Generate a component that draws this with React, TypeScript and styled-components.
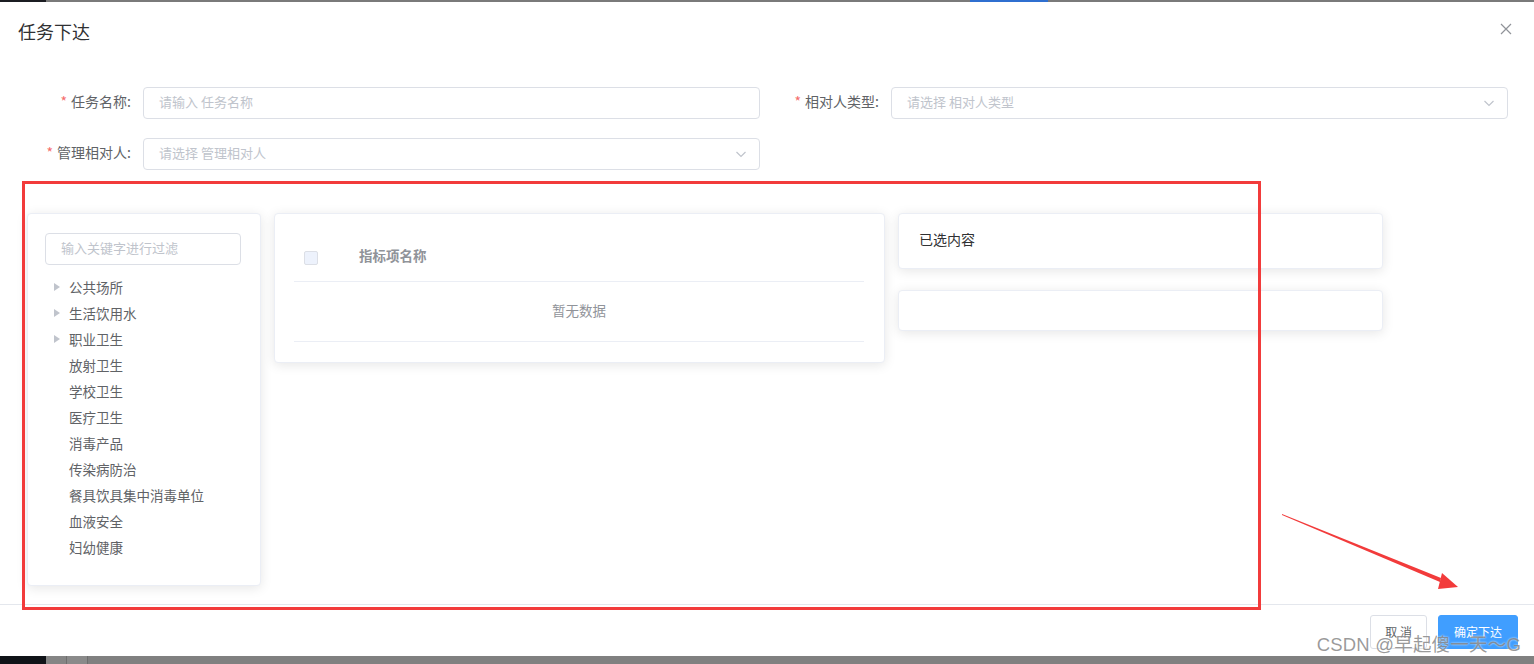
import React from 'react';
import styled, { createGlobalStyle } from 'styled-components';

const GlobalStyle = createGlobalStyle`
  html, body {
    margin: 0;
    padding: 0;
    background: #fff;
  }
  body {
    font-family: 'Noto Sans CJK SC', 'Liberation Sans', sans-serif;
    color: #606266;
  }
  * {
    box-sizing: border-box;
  }
`;

const Page = styled.div`
  position: relative;
  display: flex;
  flex-direction: column;
  height: 664px;
  overflow: hidden;
`;

const EdgeStrip = styled.div<{ $h: number; $bg: string }>`
  display: flex;
  flex: none;
  height: ${({ $h }) => $h}px;
  background: ${({ $bg }) => $bg};
`;

const EdgeSeg = styled.div<{ $w: number; $bg: string }>`
  width: ${({ $w }) => $w}px;
  background: ${({ $bg }) => $bg};
  flex: none;
`;

const Dialog = styled.div`
  flex: 1;
  display: flex;
  flex-direction: column;
  background: #fff;
`;

const Header = styled.div`
  display: flex;
  align-items: flex-start;
  justify-content: space-between;
  padding: 17px 22px 0 18px;
  height: 60px;
`;

const Title = styled.div`
  font-size: 18px;
  line-height: 24px;
  color: #303133;
  margin-top: 0;
`;

const CloseBtn = styled.button`
  border: none;
  background: none;
  padding: 0;
  margin-top: 4px;
  width: 12px;
  height: 12px;
  display: flex;
  cursor: pointer;
`;

const Form = styled.div`
  display: grid;
  grid-template-columns: 1fr 1fr;
  column-gap: 8px;
  row-gap: 19px;
  padding: 25px 26px 0 20px;
`;

const FormItem = styled.div`
  display: flex;
  align-items: center;
  height: 32px;
`;

const Label = styled.label`
  width: 123px;
  padding-right: 12px;
  padding-bottom: 3px;
  text-align: right;
  font-size: 14px;
  line-height: 29px;
  color: #606266;
  white-space: nowrap;

  &::before {
    content: '*';
    color: #f56c6c;
    margin-right: 4px;
  }
`;

const Field = styled.div`
  flex: 1;
  height: 32px;
  border: 1px solid #dcdfe6;
  border-radius: 4px;
  display: flex;
  align-items: center;
  justify-content: space-between;
  padding: 0 12px 3px 15px;
  font-size: 13px;
  color: #c0c4cc;

  svg {
    margin-top: 3px;
  }
`;

const Workspace = styled.div`
  display: flex;
  align-items: flex-start;
  gap: 13px;
  padding: 43px 0 0 27px;
  flex: 1;
`;

const Card = styled.div<{ $w: number }>`
  width: ${({ $w }) => $w}px;
  flex: none;
  background: #fff;
  border: 1px solid #ebeef5;
  border-radius: 4px;
  box-shadow: 0 2px 12px 0 rgba(0, 0, 0, 0.1);
`;

const TreeCard = styled(Card)`
  height: 373px;
  padding: 19px 19px 0 17px;
`;

const FilterInput = styled.div`
  height: 32px;
  border: 1px solid #dcdfe6;
  border-radius: 4px;
  padding: 0 0 3px 15px;
  display: flex;
  align-items: center;
  font-size: 13px;
  color: #c0c4cc;
  margin-bottom: 9px;
`;

const TreeNode = styled.div`
  display: flex;
  align-items: center;
  height: 26px;
  padding-bottom: 1px;
  font-size: 13.5px;
  color: #606266;
`;

const Caret = styled.span<{ $show: boolean }>`
  width: 24px;
  display: flex;
  justify-content: center;
  margin-top: 1px;
  visibility: ${({ $show }) => ($show ? 'visible' : 'hidden')};

  &::before {
    content: '';
    border-left: 6px solid #c0c4cc;
    border-top: 4px solid transparent;
    border-bottom: 4px solid transparent;
    margin-left: -1px;
  }
`;

const TableCard = styled(Card)`
  padding: 20px 20px 20px 19px;
`;

const HeadRow = styled.div`
  display: flex;
  align-items: center;
  height: 48px;
  padding-top: 2px;
  border-bottom: 1px solid #ebeef5;
`;

const CheckCell = styled.div`
  width: 65px;
  padding-left: 10px;
  display: flex;
  margin-top: -2px;
`;

const Checkbox = styled.span`
  width: 14px;
  height: 14px;
  border: 1px solid #dcdfe6;
  border-radius: 2px;
  background: #edf2fc;
`;

const HeadText = styled.div`
  font-size: 13.5px;
  font-weight: 700;
  color: #909399;
  margin-top: -7px;
`;

const EmptyRow = styled.div`
  height: 60px;
  display: flex;
  align-items: center;
  justify-content: center;
  padding-bottom: 4px;
  font-size: 13.5px;
  color: #909399;
  border-bottom: 1px solid #ebeef5;
`;

const SideCol = styled.div`
  display: flex;
  flex-direction: column;
  gap: 21px;
`;

const PickedCard = styled(Card)<{ $h: number }>`
  height: ${({ $h }) => $h}px;
  padding: 0 20px 4px;
  display: flex;
  align-items: center;
  font-size: 14px;
  color: #303133;
`;

const Footer = styled.div`
  flex: none;
  height: 52px;
  border-top: 1px solid #e4e7ed;
  display: flex;
  justify-content: flex-end;
  gap: 11px;
  padding: 10px 16px 0 0;
`;

const Button = styled.button<{ $primary?: boolean }>`
  height: 34px;
  padding: 0 ${({ $primary }) => ($primary ? 15 : 14)}px 2px;
  border-radius: 3px;
  border: 1px solid ${({ $primary }) => ($primary ? '#409eff' : '#dcdfe6')};
  background: ${({ $primary }) => ($primary ? '#409eff' : '#fff')};
  color: ${({ $primary }) => ($primary ? '#fff' : '#606266')};
  font-family: inherit;
  font-size: 12px;
  cursor: pointer;
`;

const Watermark = styled.div`
  position: absolute;
  right: 13px;
  bottom: 8px;
  font-family: 'Liberation Sans', 'Noto Sans CJK SC', sans-serif;
  font-size: 18.5px;
  line-height: 22px;
  color: rgba(115, 115, 115, 0.72);
  text-shadow: 0 0 2px rgba(255, 255, 255, 0.9);
  letter-spacing: 0.2px;
  pointer-events: none;
`;

const Annotation = styled.div`
  position: absolute;
  left: 22px;
  top: 181px;
  width: 1239px;
  height: 429px;
  border: 3px solid #f23b3b;
  pointer-events: none;
`;

const ArrowSvg = styled.svg`
  position: absolute;
  left: 1270px;
  top: 505px;
  pointer-events: none;
`;

const Chevron = () => (
  <svg width="12" height="12" viewBox="0 0 12 12">
    <path d="M1.5 4 L6 8.5 L10.5 4" fill="none" stroke="#c0c4cc" strokeWidth="1.2" />
  </svg>
);

const treeNodes: Array<[string, boolean]> = [
  ['公共场所', true],
  ['生活饮用水', true],
  ['职业卫生', true],
  ['放射卫生', false],
  ['学校卫生', false],
  ['医疗卫生', false],
  ['消毒产品', false],
  ['传染病防治', false],
  ['餐具饮具集中消毒单位', false],
  ['血液安全', false],
  ['妇幼健康', false],
];

export default function App() {
  return (
    <Page>
      <GlobalStyle />
      <EdgeStrip $h={2} $bg="#7a7a7a">
        <EdgeSeg $w={46} $bg="#1b1d22" />
        <EdgeSeg $w={924} $bg="#7a7a7a" />
        <EdgeSeg $w={78} $bg="#2f6fd0" />
      </EdgeStrip>
      <Dialog>
        <Header>
          <Title>任务下达</Title>
          <CloseBtn aria-label="close">
            <svg width="12" height="12" viewBox="0 0 12 12">
              <path d="M1 1 L11 11 M11 1 L1 11" stroke="#909399" strokeWidth="1.2" />
            </svg>
          </CloseBtn>
        </Header>
        <Form>
          <FormItem>
            <Label>任务名称:</Label>
            <Field>请输入 任务名称</Field>
          </FormItem>
          <FormItem>
            <Label>相对人类型:</Label>
            <Field>
              请选择 相对人类型
              <Chevron />
            </Field>
          </FormItem>
          <FormItem>
            <Label>管理相对人:</Label>
            <Field>
              请选择 管理相对人
              <Chevron />
            </Field>
          </FormItem>
        </Form>
        <Workspace>
          <TreeCard $w={234}>
            <FilterInput>输入关键字进行过滤</FilterInput>
            {treeNodes.map(([name, expandable]) => (
              <TreeNode key={name}>
                <Caret $show={expandable} />
                {name}
              </TreeNode>
            ))}
          </TreeCard>
          <TableCard $w={611}>
            <HeadRow>
              <CheckCell>
                <Checkbox />
              </CheckCell>
              <HeadText>指标项名称</HeadText>
            </HeadRow>
            <EmptyRow>暂无数据</EmptyRow>
          </TableCard>
          <SideCol>
            <PickedCard $w={485} $h={56}>
              已选内容
            </PickedCard>
            <PickedCard $w={485} $h={41} />
          </SideCol>
        </Workspace>
        <Footer>
          <Button>取 消</Button>
          <Button $primary>确定下达</Button>
        </Footer>
      </Dialog>
      <EdgeStrip $h={8} $bg="#808080">
        <EdgeSeg $w={46} $bg="#101318" />
        <EdgeSeg $w={20} $bg="#858585" />
        <EdgeSeg $w={1} $bg="#6e6e6e" />
        <EdgeSeg $w={20} $bg="#8a8a8a" />
        <EdgeSeg $w={1} $bg="#6e6e6e" />
      </EdgeStrip>
      <Annotation />
      <ArrowSvg width="200" height="90" viewBox="0 0 200 90">
        <polygon points="12,9 171,73 170,77 12,10" fill="#f23b3b" />
        <polygon points="188,82 172,68 168,84" fill="#f23b3b" />
      </ArrowSvg>
      <Watermark>CSDN @早起傻一天～G</Watermark>
    </Page>
  );
}
